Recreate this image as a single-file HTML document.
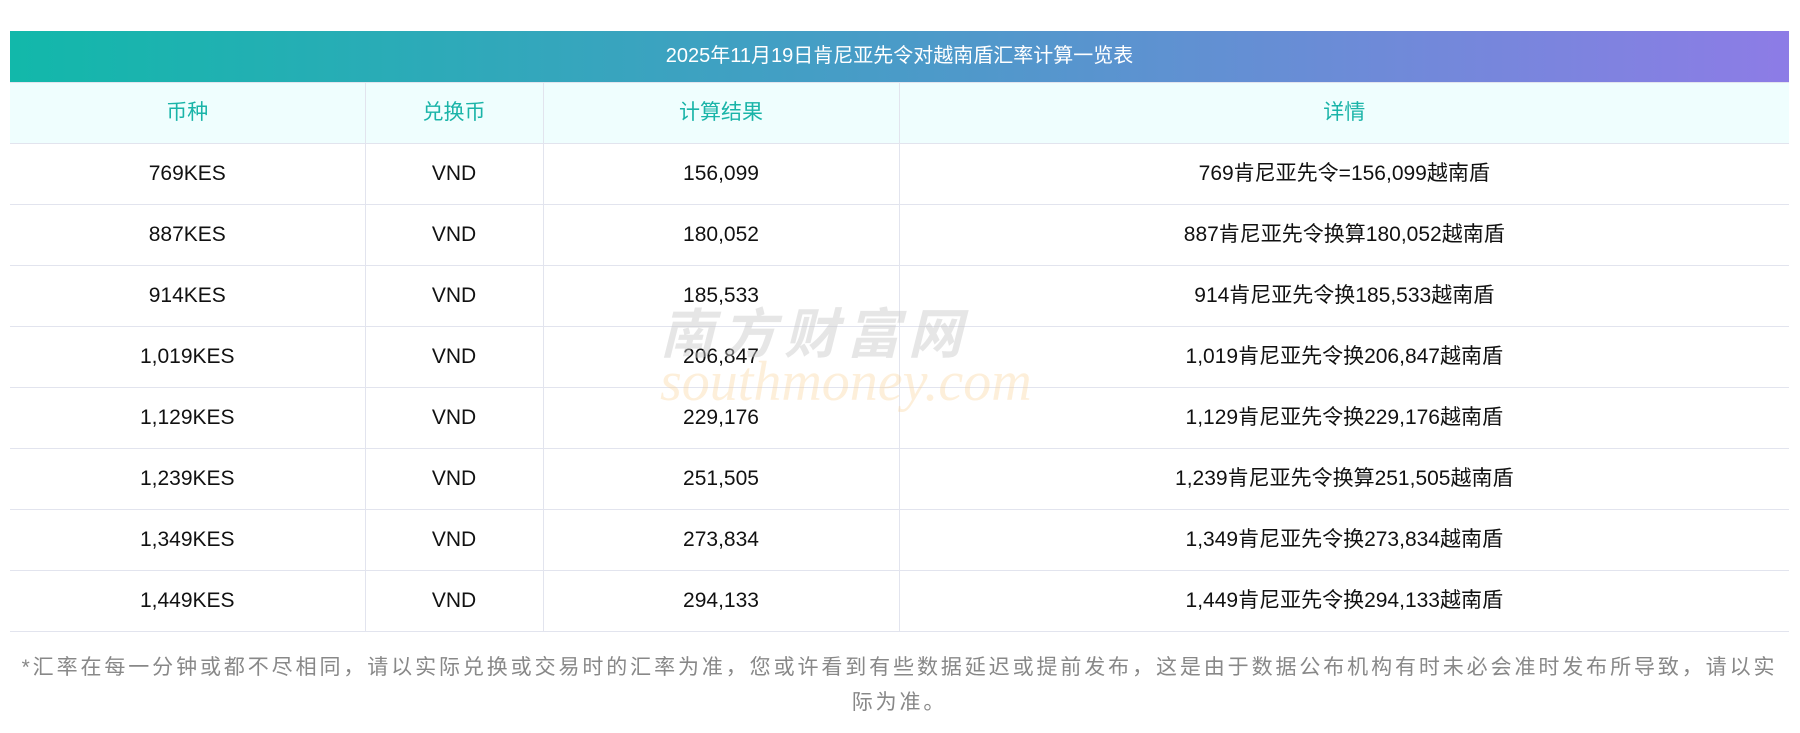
<!DOCTYPE html>
<html><head><meta charset="utf-8"><style>
body{margin:0;background:#fff;width:1800px;height:733px;overflow:hidden;font-family:"Liberation Sans","Noto Sans CJK SC",sans-serif;position:relative}
.title{position:absolute;left:10px;top:31px;width:1779px;height:51px;background:linear-gradient(90deg,#12b8aa,#4a9bc8 50%,#8d7ce6);color:#fff;font-size:20px;line-height:51px;text-align:center}
table{position:absolute;left:10px;top:82px;width:1779px;border-collapse:collapse;table-layout:fixed}
tr{height:61px}
td,th{border:1px solid #e2e4ee;text-align:center;font-size:21px;color:#111;padding:0;font-weight:normal;line-height:20px}
tr td:first-child,tr th:first-child{border-left:none}
tr td:last-child,tr th:last-child{border-right:none}
th{background:#effefe;color:#1ab4a8}
.wm{position:absolute;left:660px;top:290px;color:rgba(200,200,200,.45);font-size:54px;font-style:italic;font-weight:bold;letter-spacing:8px}
.wm2{position:absolute;left:660px;top:350px;color:rgba(250,210,150,.35);font-size:56px;font-style:italic;font-family:"Liberation Serif",serif}
.note{position:absolute;left:12px;top:650px;width:1775px;text-align:center;color:#888;font-size:21px;line-height:35px;letter-spacing:2.9px;white-space:nowrap}
</style></head><body>
<div class="title">2025年11月19日肯尼亚先令对越南盾汇率计算一览表</div>
<table>
<colgroup><col style="width:355px"><col style="width:178px"><col style="width:356px"><col></colgroup>
<tr><th>币种</th><th>兑换币</th><th>计算结果</th><th>详情</th></tr>
<tr><td>769KES</td><td>VND</td><td>156,099</td><td>769肯尼亚先令=156,099越南盾</td></tr>
<tr><td>887KES</td><td>VND</td><td>180,052</td><td>887肯尼亚先令换算180,052越南盾</td></tr>
<tr><td>914KES</td><td>VND</td><td>185,533</td><td>914肯尼亚先令换185,533越南盾</td></tr>
<tr><td>1,019KES</td><td>VND</td><td>206,847</td><td>1,019肯尼亚先令换206,847越南盾</td></tr>
<tr><td>1,129KES</td><td>VND</td><td>229,176</td><td>1,129肯尼亚先令换229,176越南盾</td></tr>
<tr><td>1,239KES</td><td>VND</td><td>251,505</td><td>1,239肯尼亚先令换算251,505越南盾</td></tr>
<tr><td>1,349KES</td><td>VND</td><td>273,834</td><td>1,349肯尼亚先令换273,834越南盾</td></tr>
<tr><td>1,449KES</td><td>VND</td><td>294,133</td><td>1,449肯尼亚先令换294,133越南盾</td></tr>
</table>
<div class="wm">南方财富网</div>
<div class="wm2">southmoney.com</div>
<div class="note">*汇率在每一分钟或都不尽相同，请以实际兑换或交易时的汇率为准，您或许看到有些数据延迟或提前发布，这是由于数据公布机构有时未必会准时发布所导致，请以实<br>际为准。</div>
</body></html>
